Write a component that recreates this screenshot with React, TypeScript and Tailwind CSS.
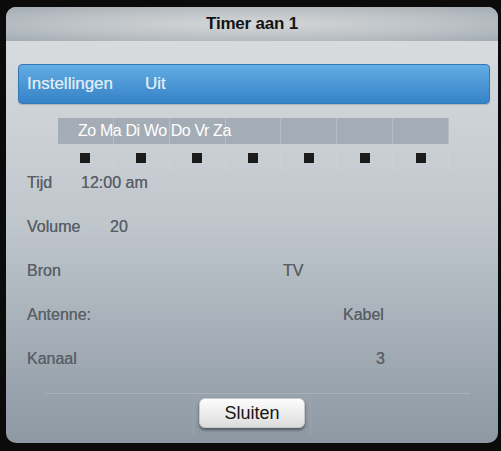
const days = [0, 1, 2, 3, 4, 5, 6];

const rows = [
  { label: "Tijd", value: "12:00 am", w: "w-[54px]", mt: "mt-0" },
  { label: "Volume", value: "20", w: "w-[83px]", mt: "mt-[20px]" },
  { label: "Bron", value: "TV", w: "w-[256px]", mt: "mt-[20px]" },
  { label: "Antenne:", value: "Kabel", w: "w-[316px]", mt: "mt-[20px]" },
  { label: "Kanaal", value: "3", w: "w-[349px]", mt: "mt-[20px]" },
];

export default function App() {
  return (
    <div className="w-[501px] h-[451px] bg-[#0b0b0c] pt-[7px] pl-[6px] font-['Liberation_Sans',Arial,sans-serif]">
      <div className="w-[492px] h-[436px] rounded-[10px] overflow-hidden flex flex-col bg-linear-to-b from-[#dcdfe1] via-[#bfc6cc] to-[#8d98a3]">
        {/* header */}
        <div className="h-[34px] shrink-0 flex items-center justify-center bg-[radial-gradient(ellipse_at_center,#d4d7d9_0%,#bdc2c6_55%,#a3acb4_100%)]">
          <span className="text-[17px] font-bold text-[#141414] tracking-[-0.2px]">Timer aan 1</span>
        </div>

        {/* blue selection bar */}
        <div className="mt-[23px] ml-[12px] w-[472px] h-[40px] rounded-[4px] border border-[#3478b8] bg-linear-to-b from-[#62ade4] to-[#3582c7] flex items-center pl-[8px] text-[17px] text-[#dfe9f3] shadow-[0_1px_1px_rgba(0,0,0,0.15)]">
          <span className="w-[118px] [text-shadow:0_0_0.4px_#dfe9f3]">Instellingen</span>
          <span className="[text-shadow:0_0_0.4px_#dfe9f3]">Uit</span>
        </div>

        {/* days table */}
        <div className="mt-[14px] ml-[52px] w-[391px]">
          <div className="relative h-[26px] bg-[#a4adb5] grid grid-cols-7">
            {days.map((d) => (
              <div key={d} className="border-r border-[#b6bdc3] last:border-r-0" />
            ))}
            <span className="absolute left-[20px] top-[3px] text-[16px] text-white tracking-[-0.4px] leading-[20px]">
              Zo Ma Di Wo Do Vr Za
            </span>
          </div>
          <div className="h-[27px] grid grid-cols-7">
            {days.map((d) => (
              <div key={d} className="flex items-center justify-center border-r border-[#cdd1d4]">
                <div className="w-[10px] h-[10px] bg-[#1b1b1c]" />
              </div>
            ))}
          </div>
        </div>

        {/* detail rows */}
        <div className="pl-[21px] flex flex-col text-[16px] text-[#5a6067] [text-shadow:0_0_0.4px_#5a6067]">
          {rows.map((r) => (
            <div key={r.label} className={`${r.mt} h-[24px] flex items-center`}>
              <span className={`${r.w} shrink-0`}>{r.label}</span>
              <span>{r.value}</span>
            </div>
          ))}
        </div>

        {/* footer */}
        <div className="mt-[22px] ml-[39px] w-[425px] h-px bg-[#a9b2ba]" />
        <div className="ml-[187px] w-[118px] h-[42px] border-x border-[#9ba5ae] flex justify-center pt-[4px]">
          <button className="w-[106px] h-[30px] rounded-[6px] bg-linear-to-b from-[#fdfdfd] to-[#dcdcdc] border border-[#c8c8c8] shadow-[0_2px_3px_rgba(0,0,0,0.45)] text-[18px] text-[#151515] flex items-center justify-center">
            Sluiten
          </button>
        </div>
      </div>
    </div>
  );
}
